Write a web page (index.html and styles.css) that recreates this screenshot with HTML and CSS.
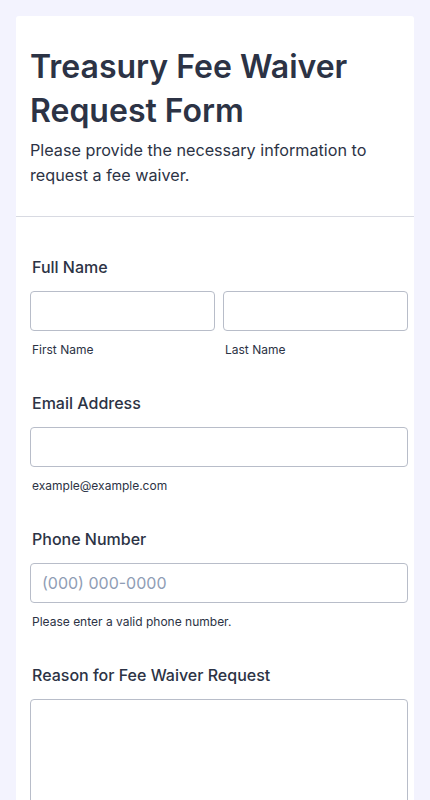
FILE: index.html
```html
<!DOCTYPE html>
<html lang="en">
<head>
<meta charset="utf-8">
<title>Treasury Fee Waiver Request Form</title>
<link rel="stylesheet" href="styles.css">
</head>
<body>
<main class="card">
  <header class="header">
    <h1 class="title">Treasury Fee Waiver Request Form</h1>
    <p class="subtitle">Please provide the necessary information to request a fee waiver.</p>
  </header>
  <form class="fields">
    <div class="field">
      <label class="label">Full Name</label>
      <div class="name-row">
        <div class="col">
          <input class="input" type="text">
          <span class="sub">First Name</span>
        </div>
        <div class="col">
          <input class="input" type="text">
          <span class="sub">Last Name</span>
        </div>
      </div>
    </div>
    <div class="field">
      <label class="label">Email Address</label>
      <input class="input" type="email">
      <span class="sub">example@example.com</span>
    </div>
    <div class="field">
      <label class="label">Phone Number</label>
      <input class="input" type="tel" placeholder="(000) 000-0000">
      <span class="sub">Please enter a valid phone number.</span>
    </div>
    <div class="field">
      <label class="label">Reason for Fee Waiver Request</label>
      <textarea class="textarea"></textarea>
    </div>
  </form>
</main>
</body>
</html>
```
FILE: styles.css
```css
* { box-sizing: border-box; }
html, body { margin: 0; padding: 0; }
body {
  background: #f3f3fe;
  font-family: Inter, "Noto Sans", sans-serif;
  color: #2c3345;
  padding: 16px 16px 0 16px;
}
.card {
  background: #ffffff;
  border-radius: 3px 3px 0 0;
  width: 398px;
}
.header {
  padding: 29px 6px 28px 14px;
  border-bottom: 1px solid #d8dae2;
}
.title {
  margin: 0;
  font-size: 32px;
  line-height: 44px;
  font-weight: 600;
  letter-spacing: 0;
}
.subtitle {
  margin: 5px 0 0 0;
  font-size: 16.2px;
  line-height: 25px;
  font-weight: 400;
}
.fields {
  padding: 40px 6px 0 14px;
  display: flex;
  flex-direction: column;
  gap: 35px;
}
.field {
  display: flex;
  flex-direction: column;
}
.label {
  font-size: 16px;
  line-height: 20px;
  font-weight: 500;
  padding-left: 2px;
  margin-bottom: 14px;
}
.name-row {
  display: flex;
  gap: 8px;
}
.col {
  flex: 1;
  display: flex;
  flex-direction: column;
}
.input {
  height: 40px;
  width: 100%;
  border: 1px solid #b8bdc9;
  border-radius: 4px;
  background: #fff;
  font-family: Inter, sans-serif;
  font-size: 16px;
  padding: 0 11px;
  color: #2c3345;
  outline: none;
}
.input::placeholder { color: #8f9db5; }
.sub {
  margin-top: 11px;
  font-size: 12px;
  line-height: 16px;
  padding-left: 2px;
}
.textarea {
  height: 140px;
  width: 100%;
  border: 1px solid #b8bdc9;
  border-radius: 4px;
  resize: none;
  outline: none;
}
```
